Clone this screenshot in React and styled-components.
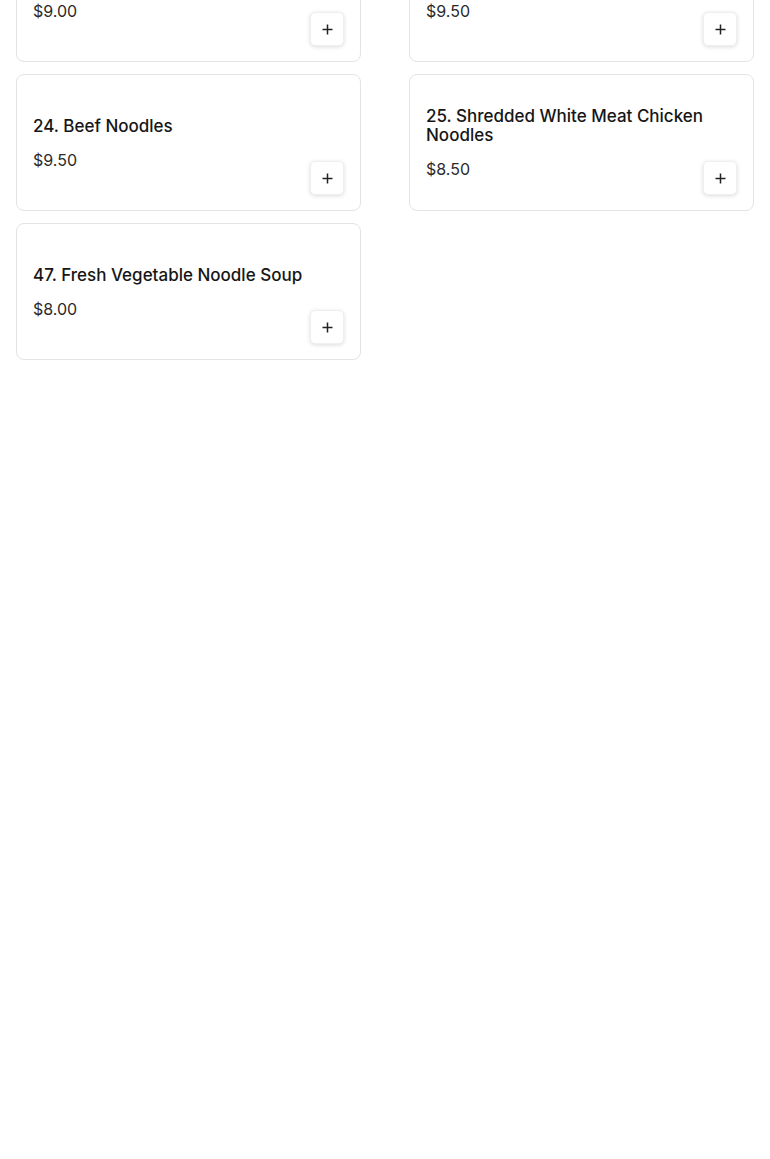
import React from 'react';
import styled, { createGlobalStyle } from 'styled-components';

const GlobalStyle = createGlobalStyle`
  html, body {
    margin: 0;
    padding: 0;
    background: #ffffff;
  }
  body {
    font-family: Inter, "Open Sans", sans-serif;
    color: #1b1b1b;
  }
`;

const Grid = styled.div`
  display: grid;
  grid-template-columns: 1fr 1fr;
  column-gap: 48px;
  row-gap: 12px;
  padding: 0 16px;
  margin-top: -75px;
`;

// info and button share one grid cell: info centered, button in the corner
const Card = styled.div`
  display: grid;
  grid-template-areas: 'cell';
  min-height: 137px;
  box-sizing: border-box;
  padding: 16px 16px 15px 16px;
  border: 1px solid #e3e3e3;
  border-radius: 8px;
  background: #fff;
`;

const Info = styled.div`
  grid-area: cell;
  align-self: center;
  min-width: 0;
`;

const Title = styled.div`
  font-size: 17px;
  font-weight: 500;
  line-height: 19px;
  color: #161616;
`;

const Price = styled.div`
  margin-top: 14px;
  font-size: 16px;
  font-weight: 400;
  line-height: 20px;
  color: #2a2a2a;
`;

const AddButton = styled.button`
  grid-area: cell;
  align-self: end;
  justify-self: end;
  width: 34px;
  height: 34px;
  padding: 0;
  display: flex;
  align-items: center;
  justify-content: center;
  border: 1px solid #efefef;
  border-radius: 5px;
  background: #fff;
  box-shadow: 0 1px 4px rgba(0, 0, 0, 0.14);
  cursor: pointer;
`;

const PlusIcon = () => (
  <svg width="11" height="11" viewBox="0 0 11 11">
    <path d="M5.5 0.5v10M0.5 5.5h10" stroke="#222" strokeWidth="1.5" fill="none" />
  </svg>
);

const items = [
  { name: '22. Roast Pork Noodles', price: '$9.00' },
  { name: '23. Seafood Noodles', price: '$9.50' },
  { name: '24. Beef Noodles', price: '$9.50' },
  { name: '25. Shredded White Meat Chicken Noodles', price: '$8.50' },
  { name: '47. Fresh Vegetable Noodle Soup', price: '$8.00' },
];

const MenuItem = ({ name, price }) => (
  <Card>
    <Info>
      <Title>{name}</Title>
      <Price>{price}</Price>
    </Info>
    <AddButton aria-label="Add">
      <PlusIcon />
    </AddButton>
  </Card>
);

export default function App() {
  return (
    <>
      <GlobalStyle />
      <Grid>
        {items.map((item) => (
          <MenuItem key={item.name} {...item} />
        ))}
      </Grid>
    </>
  );
}
